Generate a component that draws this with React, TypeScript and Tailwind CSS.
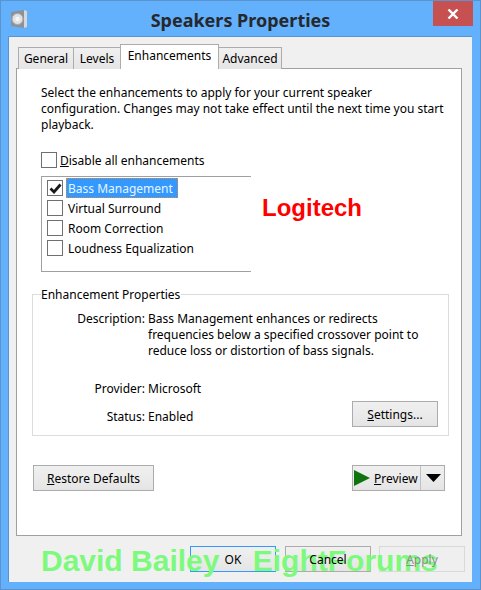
import React from "react";

const font = "font-['Noto_Sans',sans-serif]";

const rows = ["Bass Management", "Virtual Surround", "Room Correction", "Loudness Equalization"];

// Win8 style push button
const Button: React.FC<{ className?: string; children: React.ReactNode }> = ({ className = "", children }) => (
  <button className={`h-[26px] border border-[#acacac] bg-gradient-to-b from-[#f0f0f0] to-[#e5e5e5] text-[12px] text-black flex items-center justify-center ${className}`}>
    {children}
  </button>
);

// button caption, stays on top of the watermark
const Label: React.FC<{ className?: string; children: React.ReactNode }> = ({ className = "", children }) => (
  <span className={`relative z-20 pt-[2px] ${className}`}>{children}</span>
);

const Checkbox: React.FC<{ checked?: boolean; className?: string }> = ({ checked, className = "" }) => (
  <span className={`flex items-center justify-center border border-[#707070] bg-white ${className}`}>
    {checked && (
      <svg width="13" height="11" viewBox="0 0 13 11">
        <path d="M1.5 5.5 L5 9 L11.5 1.5" fill="none" stroke="#1a1a1a" strokeWidth="2.8" />
      </svg>
    )}
  </span>
);

const SpeakerIcon = () => (
  <svg width="18" height="20" viewBox="0 0 18 20">
    <path d="M1 3 L14 1 L17 2 L17 18 L14 19 L1 17Z" fill="#8e9296" />
    <path d="M14 1 L17 2 L17 18 L14 19Z" fill="#d4d8da" />
    <circle cx="7.5" cy="10" r="5.5" fill="#dfe1e3" stroke="#a5a8ab" />
    <circle cx="7.5" cy="10" r="2.2" fill="#f6f6f6" />
  </svg>
);

const App: React.FC = () => {
  return (
    <div className={`relative w-[481px] h-[590px] overflow-hidden border border-[#5b93cf] bg-[#63b0fd] text-[12px] leading-[16px] text-black ${font}`}>
      {/* title bar */}
      <div className="relative h-[35px] flex items-start">
        <div className="ml-[9px] mt-[8px]">
          <SpeakerIcon />
        </div>
        <div className="absolute left-0 right-0 top-[6px] text-center text-[18px] leading-[26px] font-bold text-[#26282c]">
          Speakers Properties
        </div>
        <div className="absolute left-[432px] top-0 w-[40px] h-[25px] bg-[#c75050] flex items-center justify-center">
          <svg width="12" height="10" viewBox="0 0 12 10">
            <path d="M1.5 0.5 L10.5 9.5 M10.5 0.5 L1.5 9.5" stroke="#fff" strokeWidth="2.4" />
          </svg>
        </div>
      </div>

      {/* client area */}
      <div className="ml-[7px] w-[464px] h-[546px] bg-[#f0f0f0] border border-[#5b93cf] border-r-0 border-b-0 pl-[7px]">
        {/* tabs */}
        <div className="flex items-end h-[32px] ml-[2px] relative z-10">
          <div className="w-[56px] h-[22px] border border-[#acacac] border-b-0 bg-gradient-to-b from-[#f0f0f0] to-[#e5e5e5] text-center leading-[21px]">General</div>
          <div className="w-[47px] h-[22px] border border-[#acacac] border-b-0 border-l-0 bg-gradient-to-b from-[#f0f0f0] to-[#e5e5e5] text-center leading-[21px]">Levels</div>
          <div className="w-[99px] h-[25px] -ml-[1px] border border-[#acacac] border-b-0 bg-white text-center leading-[22px]">Enhancements</div>
          <div className="w-[63px] h-[22px] border border-[#acacac] border-b-0 border-l-0 bg-gradient-to-b from-[#f0f0f0] to-[#e5e5e5] text-center leading-[21px]">Advanced</div>
        </div>

        {/* panel */}
        <div className="w-[446px] h-[468px] -mt-[1px] border border-[#a0a0a0] bg-white flex flex-col">
          <p className="mt-[16px] ml-[24px] w-[410px]">
            Select the enhancements to apply for your current speaker configuration. Changes may not take effect until the next time you start playback.
          </p>

          <div className="mt-[19px] ml-[24px] flex items-center h-[16px]">
            <Checkbox className="w-[16px] h-[16px]" />
            <span className="ml-[3px] pt-[2px]"><u>D</u>isable all enhancements</span>
          </div>

          <div className="mt-[8px] ml-[24px] w-[210px] h-[96px] border border-[#a0a0a0] border-r-0 pt-[1px] pl-[5px]">
            {rows.map((r, i) => (
              <div key={r} className="flex items-center h-[20px]">
                <Checkbox checked={i === 0} className="w-[16px] h-[16px]" />
                {i === 0 ? (
                  <span className="ml-[3px] w-[112px] h-[20px] pl-[1px] leading-[20px] bg-[#3399ff] text-[#e8f4ff] border border-dotted border-[#d98a3a]">{r}</span>
                ) : (
                  <span className="ml-[5px] pt-[2px]">{r}</span>
                )}
              </div>
            ))}
          </div>

          {/* Enhancement Properties group */}
          <div className="relative mt-[22px] ml-[15px] w-[417px] h-[142px] border border-[#dcdcdc] pt-[16px]">
            <span className="absolute left-[8px] -top-[8px] bg-white pr-[1px]">Enhancement Properties</span>
            <div className="flex">
              <span className="w-[112px] text-right">Description:</span>
              <span className="ml-[3px] w-[285px]">
                Bass Management enhances or redirects frequencies below a specified crossover point to reduce loss or distortion of bass signals.
              </span>
            </div>
            <div className="flex mt-[22px]">
              <span className="w-[112px] text-right">Provider:</span>
              <span className="ml-[3px]">Microsoft</span>
            </div>
            <div className="flex mt-[4px] h-[26px] pr-[10px]">
              <span className="w-[112px] text-right mt-[8px]">Status:</span>
              <span className="ml-[3px] mt-[8px]">Enabled</span>
              <Button className="ml-auto w-[86px]"><Label><u>S</u>ettings...</Label></Button>
            </div>
          </div>

          <div className="mt-[29px] mx-[16px] flex justify-between">
            <Button className="w-[121px]"><Label><u>R</u>estore Defaults</Label></Button>
            <Button className="w-[93px] justify-start">
              <svg className="ml-[1px]" width="16" height="16" viewBox="0 0 16 16">
                <path d="M0 0 L16 8 L0 16Z" fill="#0f730f" />
              </svg>
              <Label className="ml-[4px]"><u>P</u>review</Label>
              <span className="ml-[2px] w-px h-[24px] bg-[#c0c0c0]" />
              <svg className="ml-[5px]" width="15" height="8" viewBox="0 0 15 8">
                <path d="M0 0 L15 0 L7.5 8Z" fill="#000" />
              </svg>
            </Button>
          </div>
        </div>

        {/* dialog buttons */}
        <div className="mt-[10px] flex">
          <Button className="ml-[174px] w-[86px] !border-[#3399ff]"><Label>OK</Label></Button>
          <Button className="ml-[9px] w-[86px] !border-[#acacac]"><Label>Cancel</Label></Button>
          <Button className="ml-[8px] w-[86px] !border-[#d9d9d9] !bg-none bg-[#efefef] !text-[#8c8c8c]"><Label><u>A</u>pply</Label></Button>
        </div>
      </div>

      {/* overlay text added on the screenshot */}
      <div className="absolute left-[261px] top-[191px] font-['Liberation_Sans',sans-serif] font-bold text-[24px] leading-[32px] text-[#ff0000]">
        Logitech
      </div>
      <div className="absolute z-10 left-[40px] top-[542px] whitespace-pre font-['Liberation_Sans',sans-serif] font-bold text-[30px] leading-[36px] text-[#7dfa7d]">
        David Bailey    EightForums
      </div>
    </div>
  );
};

export default App;
